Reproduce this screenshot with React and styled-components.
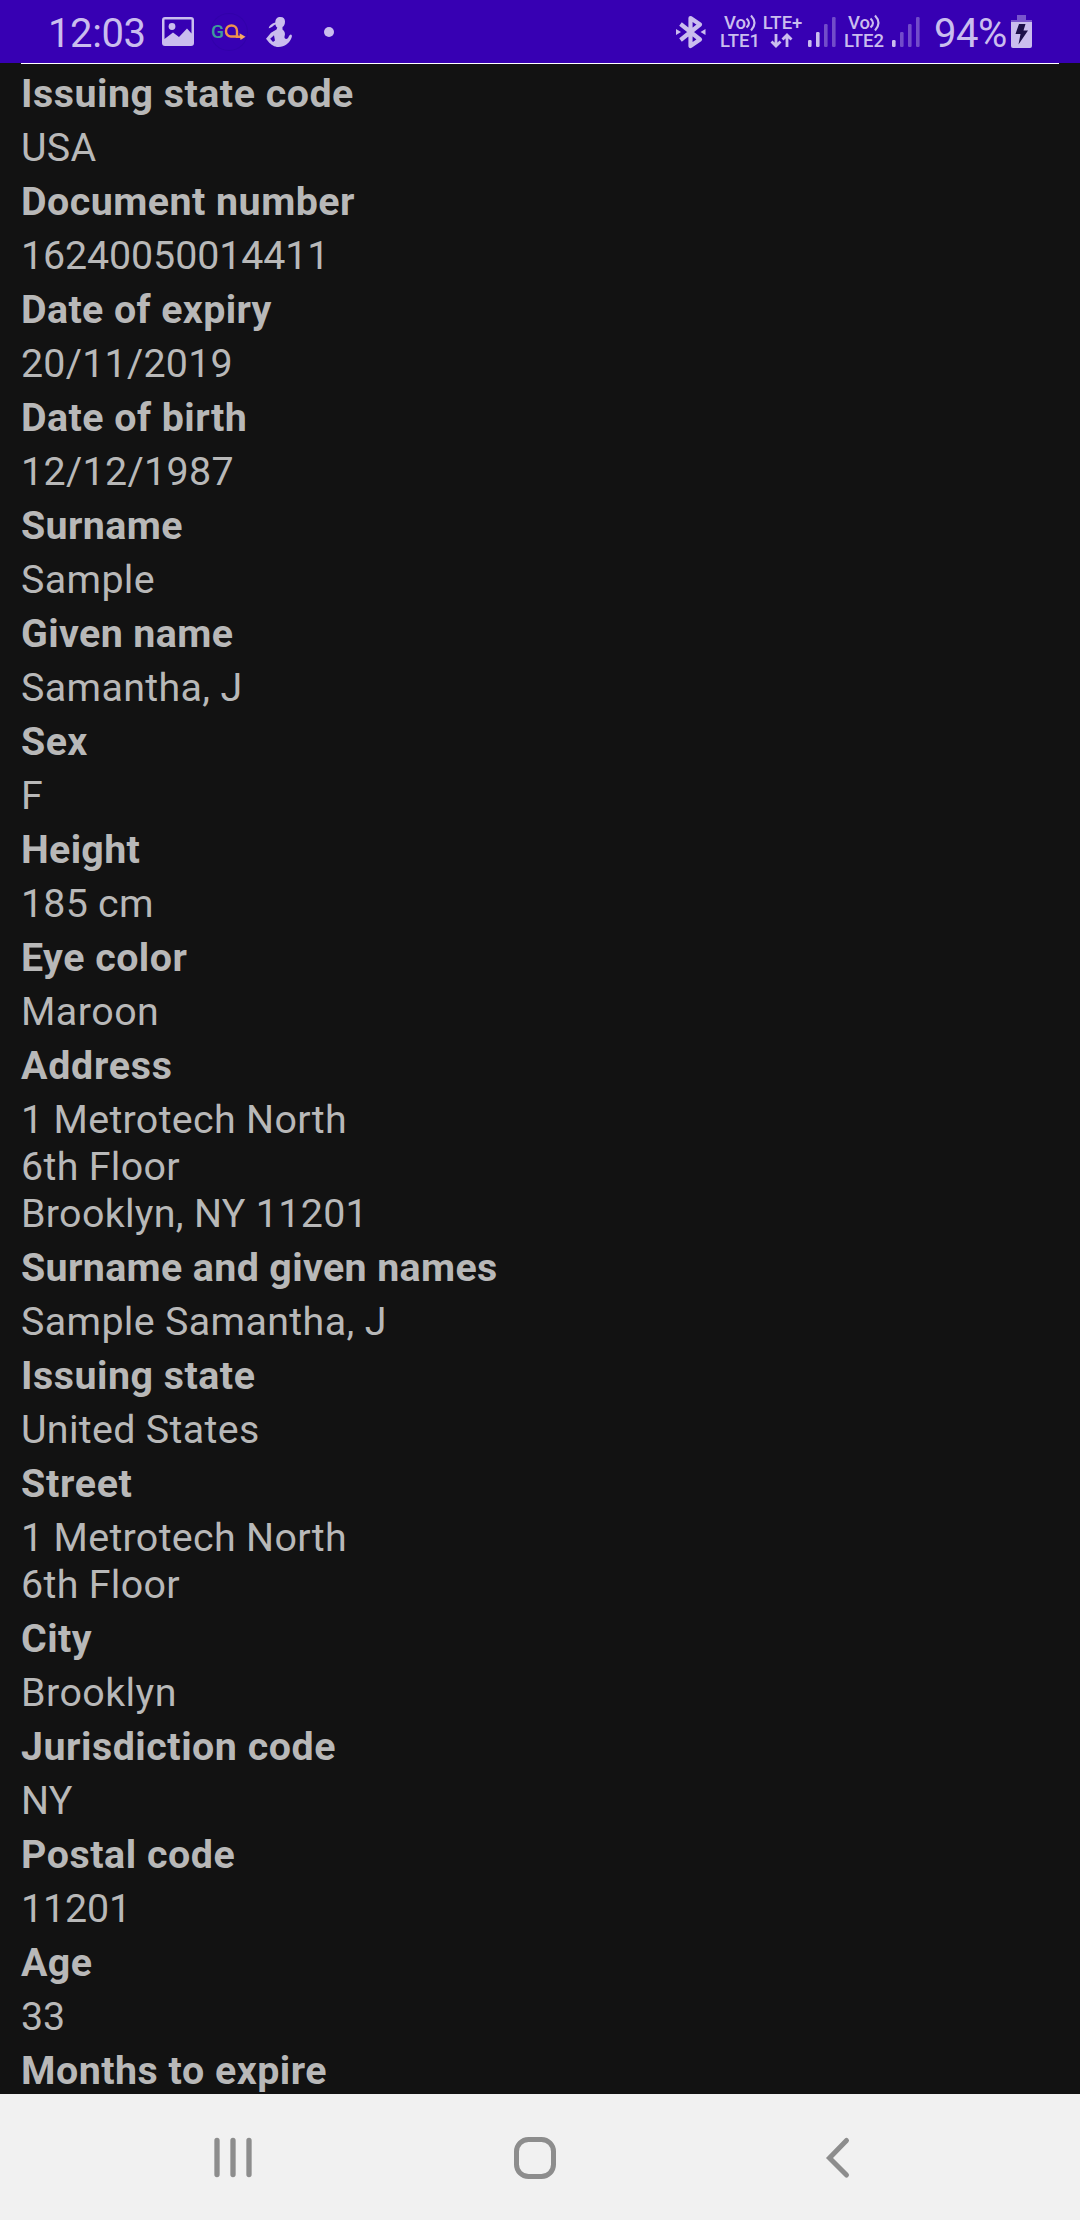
import React from "react";
import styled, { createGlobalStyle } from "styled-components";

const TINT = "#cabdee";

const GlobalStyle = createGlobalStyle`
  html, body { margin: 0; padding: 0; background: #121212; }
  * { box-sizing: border-box; }
`;

const Screen = styled.div`
  display: flex;
  flex-direction: column;
  width: 1080px;
  height: 2220px;
  overflow: hidden;
  background: #121212;
  font-family: Roboto, "Noto Sans", sans-serif;
`;

const StatusBar = styled.header`
  display: flex;
  flex: none;
  justify-content: space-between;
  height: 63px;
  padding: 0 48px 0 48px;
  background: #3700b3;
  color: ${TINT};
`;

const StatusGroup = styled.div`
  display: flex;
  align-items: center;
  height: 63px;
`;

const StatusText = styled.span`
  font-size: 40px;
  line-height: 47px;
  font-weight: 400;
  white-space: nowrap;
  width: ${(p) => p.$width}px;
  margin: 3px ${(p) => p.$after}px 0 0;
  letter-spacing: ${(p) => p.$tracking || 0}px;
`;

const Icon = styled.svg`
  display: block;
  flex: none;
  overflow: visible;
  margin-right: ${(p) => p.$after || 0}px;
`;

const Carrier = styled.div`
  display: grid;
  grid-template-columns: ${(p) => p.$columns};
  grid-template-rows: 18px 17px;
  justify-items: center;
  align-items: center;
  margin-right: ${(p) => p.$after}px;
`;

const CarrierText = styled.span`
  display: flex;
  align-items: center;
  height: 16px;
  font-size: 18.5px;
  line-height: 16px;
  font-weight: 500;
  white-space: nowrap;
  padding-left: ${(p) => p.$indent || 0}px;
`;

const Logo = styled.div`
  display: flex;
  align-items: center;
  width: 36px;
  height: 36px;
  margin-right: 19px;
  border-radius: 50%;
  box-shadow: 0 0 0 1px rgba(20, 0, 110, 0.12);
`;

const LogoLetter = styled.span`
  width: 14px;
  font-size: 19px;
  line-height: 20px;
  font-weight: 500;
  color: #3f9c9b;
`;

const Content = styled.main`
  flex: 1;
  min-height: 0;
  overflow: hidden;
  padding: 0 21px;
`;

const Rule = styled.div`
  height: 1px;
  background: #ffffff;
`;

const Fields = styled.dl`
  margin: 0;
  padding-top: 6px;
  color: #b8b8b8;
  font-size: 39.375px;
  line-height: 47px;
`;

const Label = styled.dt`
  font-weight: 700;
  padding-bottom: 7px;
  letter-spacing: ${(p) => p.$tracking}px;
`;

const Value = styled.dd`
  margin: 0;
  padding-bottom: 7px;
  white-space: pre-line;
  letter-spacing: ${(p) => p.$tracking}px;
`;

const NavBar = styled.nav`
  display: flex;
  flex: none;
  justify-content: space-between;
  align-items: center;
  height: 126px;
  padding: 2px 230px 0 212px;
  background: #f1f1f1;
`;

const fields = [
  ["Issuing state code", 0.5, "USA", 0.3],
  ["Document number", 0.47, "16240050014411", -0.1],
  ["Date of expiry", 0.38, "20/11/2019", 0.25],
  ["Date of birth", 0.45, "12/12/1987", 0.35],
  ["Surname", 0.37, "Sample", 0.36],
  ["Given name", 0.39, "Samantha, J", 0.36],
  ["Sex", 0.4, "F", 0],
  ["Height", 0.3, "185 cm", 0.25],
  ["Eye color", 0.48, "Maroon", 0.5],
  ["Address", 0.75, "1 Metrotech North\n6th Floor\nBrooklyn, NY 11201", 0.32],
  ["Surname and given names", 0.36, "Sample Samantha, J", 0.36],
  ["Issuing state", 0.5, "United States", 0.33],
  ["Street", 0.7, "1 Metrotech North\n6th Floor", 0.32],
  ["City", 0.4, "Brooklyn", 0.45],
  ["Jurisdiction code", 0.52, "NY", 0.3],
  ["Postal code", 0.55, "11201", -0.1],
  ["Age", 0.4, "33", 0],
  ["Months to expire", 0.5, null, 0],
];

function PictureIcon() {
  return (
    <Icon $after={17} width="32" height="30" viewBox="0 0 32 30">
      <path
        fillRule="evenodd"
        fill={TINT}
        d="M3 0H29a3 3 0 0 1 3 3V26a3 3 0 0 1-3 3H3a3 3 0 0 1-3-3V3a3 3 0 0 1 3-3ZM2.500 2.500V22L11 15.500L17 20L25 11.500L29.500 16.500V2.500Z"
      />
      <circle cx="10" cy="9.500" r="3.400" fill={TINT} />
    </Icon>
  );
}

function LoopArrow() {
  return (
    <Icon width="21" height="18" viewBox="0 0 21 18">
      <path
        d="M11.500 13.500H6.500A5 5.200 0 0 1 1 8C1 4.500 3.500 2.500 6.500 2.500S12 4.500 12 8V13.700H16"
        fill="none"
        stroke="#f0924d"
        strokeWidth="2.400"
      />
      <path d="M14.500 10.300L20.500 13.700L15.500 17Z" fill="#f7a861" />
    </Icon>
  );
}

function FigureIcon() {
  return (
    <Icon $after={32} width="26" height="30" viewBox="0 0 26 30">
      <path
        fill={TINT}
        d="M14.500 0C17.500 0 19 2 19 4.500C19 7.500 18 9.200 16.500 10V12.500C19 14 19.500 17 18.500 19.500C18 21.500 20 22.500 21.500 21.500C23 20.500 22.500 18 25 17.500C26.500 18 26 20 25 22C23 26 19 30 12.500 30C8 30 5.500 27.500 3.500 26L0 21.800L5 15.800L10.500 12.500L11.300 10.500C10 9.800 9.500 8.500 9.500 7.500C7.500 8 6 11 2.800 11.200C3 9 5.500 6.500 9.300 5.500C9.300 2 11 0 14.500 0Z"
      />
      <path d="M4.200 21.700L8 18.300L9 23.500L7 25Z" fill="#3700b3" />
    </Icon>
  );
}

function BluetoothIcon() {
  return (
    <Icon $after={14} width="30" height="34" viewBox="0 0 30 34">
      <path
        d="M4.500 9L24 24.500L14.500 31V3L24 9.500L4.500 25"
        fill="none"
        stroke={TINT}
        strokeWidth="4.200"
        strokeLinejoin="round"
      />
      <path d="M0 14L5 17L0 20ZM29.500 14L24.500 17L29.500 20Z" fill={TINT} />
    </Icon>
  );
}

function Waves() {
  return (
    <Icon width="10" height="18" viewBox="0 0 10 18">
      <path
        d="M0.500 4.500Q5.500 9 0.500 13.500M5 1.500Q12 9 5 16.500"
        fill="none"
        stroke={TINT}
        strokeWidth="2.100"
      />
    </Icon>
  );
}

function DataArrows() {
  return (
    <Icon width="23" height="15" viewBox="0 0 23 15">
      <path
        d="M6 1V12M1.500 8.500L6 13L10.500 8.500M17 14V3M12.500 6.500L17 2L21.500 6.500"
        fill="none"
        stroke={TINT}
        strokeWidth="2.800"
      />
    </Icon>
  );
}

function Signal({ level, after }) {
  const heights = [7, 15, 23, 30];
  return (
    <Icon $after={after} width="28" height="30" viewBox="0 0 28 30">
      {heights.map((h, i) => (
        <rect
          key={h}
          x={i * 8}
          y={30 - h}
          width="3.600"
          height={h}
          rx="1.200"
          fill={TINT}
          opacity={i < level ? 1 : 0.4}
        />
      ))}
    </Icon>
  );
}

function BatteryIcon() {
  return (
    <Icon width="21" height="33" viewBox="0 0 21 33">
      <path d="M6 0H15V5H21V7H0V5H6Z" fill={TINT} opacity="0.45" />
      <path d="M0 7H21V31a2 2 0 0 1-2 2H2a2 2 0 0 1-2-2Z" fill={TINT} />
      <path d="M8 9H14.500L12.500 15.500H17L7.500 29.500L9.500 19H4.500Z" fill="#1c0f48" />
    </Icon>
  );
}

export default function App() {
  return (
    <>
      <GlobalStyle />
      <Screen>
        <StatusBar>
          <StatusGroup>
            <StatusText $width={98} $after={16} $tracking={-0.4}>12:03</StatusText>
            <PictureIcon />
            <Logo>
              <LogoLetter>G</LogoLetter>
              <LoopArrow />
            </Logo>
            <FigureIcon />
            <Icon width="10" height="10" viewBox="0 0 10 10">
              <circle cx="5" cy="5" r="5" fill={TINT} />
            </Icon>
          </StatusGroup>
          <StatusGroup>
            <BluetoothIcon />
            <Carrier $columns="40px 42px" $after={6}>
              <CarrierText>Vo<Waves /></CarrierText>
              <CarrierText $indent={3}>LTE+</CarrierText>
              <CarrierText>LTE1</CarrierText>
              <DataArrows />
            </Carrier>
            <Signal level={2} after={8} />
            <Carrier $columns="40px" $after={8}>
              <CarrierText>Vo<Waves /></CarrierText>
              <CarrierText>LTE2</CarrierText>
            </Carrier>
            <Signal level={1} after={14} />
            <StatusText $width={73} $after={4} $tracking={-0.5}>94%</StatusText>
            <BatteryIcon />
          </StatusGroup>
        </StatusBar>
        <Content>
          <Rule />
          <Fields>
            {fields.map(([label, labelTracking, value, valueTracking]) => (
              <React.Fragment key={label}>
                <Label $tracking={labelTracking}>{label}</Label>
                {value && <Value $tracking={valueTracking}>{value}</Value>}
              </React.Fragment>
            ))}
          </Fields>
        </Content>
        <NavBar>
          <Icon width="42" height="42" viewBox="0 0 42 42">
            <path
              d="M5 3.500V37.500M21 3.500V37.500M37 3.500V37.500"
              stroke="#8d8d8d"
              strokeWidth="5.300"
              strokeLinecap="round"
            />
          </Icon>
          <Icon $after={10} width="42" height="42" viewBox="0 0 42 42">
            <rect x="2.500" y="2.500" width="37" height="37" rx="12" fill="none" stroke="#8d8d8d" strokeWidth="5" />
          </Icon>
          <Icon width="24" height="42" viewBox="0 0 24 42">
            <path
              d="M20.500 3.500L3.500 21L20.500 38"
              fill="none"
              stroke="#8d8d8d"
              strokeWidth="5"
              strokeLinecap="round"
            />
          </Icon>
        </NavBar>
      </Screen>
    </>
  );
}
